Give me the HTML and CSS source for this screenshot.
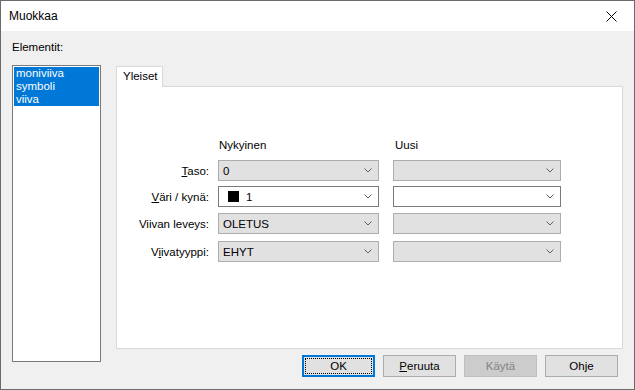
FILE: index.html
```html
<!DOCTYPE html>
<html lang="fi">
<head>
    <meta charset="UTF-8">
    <title>Muokkaa</title>
    <link rel="stylesheet" href="styles.css">
</head>
<body>
    <div class="window">
        <div class="titlebar">
            <span class="title">Muokkaa</span>
            <span class="close">
                <svg width="11" height="11" viewBox="0 0 11 11"><path d="M0.5 0.5 L10.5 10.5 M10.5 0.5 L0.5 10.5" stroke="#000" stroke-width="1"/></svg>
            </span>
        </div>
        <div class="content">
            <div class="left">
                <div class="caption">Elementit:</div>
                <div class="listbox">
                    <div class="item selected">moniviiva</div>
                    <div class="item selected">symboli</div>
                    <div class="item selected">viiva</div>
                </div>
            </div>
            <div class="right">
                <div class="tabs">
                    <div class="tab">Yleiset</div>
                </div>
                <div class="page">
                    <div class="row head">
                        <span class="lbl"></span>
                        <span class="col-cur">Nykyinen</span>
                        <span class="col-new">Uusi</span>
                    </div>
                    <div class="row">
                        <span class="lbl"><u>T</u>aso:</span>
                        <div class="combo cur"><span class="val">0</span><svg class="chev" width="8" height="5" viewBox="0 0 8 5"><path d="M0.5 0.5 L4 4 L7.5 0.5" fill="none" stroke="#606060"/></svg></div>
                        <div class="combo new"><span class="val"></span><svg class="chev" width="8" height="5" viewBox="0 0 8 5"><path d="M0.5 0.5 L4 4 L7.5 0.5" fill="none" stroke="#606060"/></svg></div>
                    </div>
                    <div class="row">
                        <span class="lbl"><u>V</u>äri / kynä:</span>
                        <div class="combo cur edit"><span class="val"><span class="swatch"></span>1</span><svg class="chev" width="8" height="5" viewBox="0 0 8 5"><path d="M0.5 0.5 L4 4 L7.5 0.5" fill="none" stroke="#606060"/></svg></div>
                        <div class="combo new edit"><span class="val"></span><svg class="chev" width="8" height="5" viewBox="0 0 8 5"><path d="M0.5 0.5 L4 4 L7.5 0.5" fill="none" stroke="#606060"/></svg></div>
                    </div>
                    <div class="row">
                        <span class="lbl">Viivan leveys:</span>
                        <div class="combo cur"><span class="val">OLETUS</span><svg class="chev" width="8" height="5" viewBox="0 0 8 5"><path d="M0.5 0.5 L4 4 L7.5 0.5" fill="none" stroke="#606060"/></svg></div>
                        <div class="combo new"><span class="val"></span><svg class="chev" width="8" height="5" viewBox="0 0 8 5"><path d="M0.5 0.5 L4 4 L7.5 0.5" fill="none" stroke="#606060"/></svg></div>
                    </div>
                    <div class="row">
                        <span class="lbl">V<u>i</u>ivatyyppi:</span>
                        <div class="combo cur"><span class="val">EHYT</span><svg class="chev" width="8" height="5" viewBox="0 0 8 5"><path d="M0.5 0.5 L4 4 L7.5 0.5" fill="none" stroke="#606060"/></svg></div>
                        <div class="combo new"><span class="val"></span><svg class="chev" width="8" height="5" viewBox="0 0 8 5"><path d="M0.5 0.5 L4 4 L7.5 0.5" fill="none" stroke="#606060"/></svg></div>
                    </div>
                </div>
                <div class="buttons">
                    <button class="btn default"><span class="focus">OK</span></button>
                    <button class="btn"><u>P</u>eruuta</button>
                    <button class="btn disabled">Käytä</button>
                    <button class="btn">Ohje</button>
                </div>
            </div>
        </div>
    </div>
</body>
</html>
```

FILE: styles.css
```css
* {
    box-sizing: border-box;
}
body {
    margin: 0;
    font-family: "Liberation Sans", Arial, sans-serif;
    font-size: 11.5px;
    color: #000;
}
.window {
    width: 635px;
    height: 390px;
    border: 1px solid #6b6b6b;
    background-color: #f0f0f0;
    display: flex;
    flex-direction: column;
}
.titlebar {
    height: 30px;
    background-color: #fff;
    display: flex;
    align-items: center;
    justify-content: space-between;
    padding-left: 8px;
    flex-shrink: 0;
}
.title {
    font-size: 12px;
}
.close {
    width: 46px;
    height: 30px;
    display: flex;
    align-items: center;
    justify-content: center;
}
.content {
    display: flex;
    flex: 1;
}
.left {
    padding: 9px 0 0 11px;
    width: 115px;
}
.caption {
    line-height: 15px;
    height: 15px;
    margin-bottom: 10px;
}
.listbox {
    width: 89px;
    height: 297px;
    border: 1px solid #7a7a7a;
    background-color: #fff;
    padding: 1px;
}
.item {
    line-height: 13px;
    height: 13px;
    padding-left: 2px;
}
.item.selected {
    background-color: #0078d7;
    color: #fff;
}
.right {
    padding-top: 35px;
    width: 507px;
    display: flex;
    flex-direction: column;
}
.tabs {
    display: flex;
    height: 20px;
}
.tab {
    width: 47px;
    height: 21px;
    border: 1px solid #d9d9d9;
    border-bottom: none;
    background-color: #fff;
    padding-left: 6px;
    line-height: 18px;
    position: relative;
    z-index: 1;
}
.page {
    height: 263px;
    border: 1px solid #d9d9d9;
    background-color: #fff;
    padding: 50px 0 0 10px;
}
.row {
    display: flex;
    align-items: center;
    height: 21px;
}
.row.head {
    height: 15px;
    margin-bottom: 8px;
}
.row:nth-child(3) {
    margin-top: 5px;
}
.row:nth-child(4) {
    margin-top: 6px;
}
.row:nth-child(5) {
    margin-top: 7px;
}
.lbl {
    width: 82px;
    text-align: right;
    margin-right: 9px;
    white-space: nowrap;
}
.col-cur {
    width: 161px;
    margin-right: 14px;
    padding-left: 1px;
}
.col-new {
    padding-left: 2px;
}
.combo {
    height: 21px;
    border: 1px solid #adadad;
    background-color: #e1e1e1;
    display: flex;
    align-items: center;
    justify-content: space-between;
    padding: 0 6px 0 4px;
}
.combo.edit {
    background-color: #fff;
    border-color: #7a7a7a;
}
.combo.cur {
    width: 161px;
    margin-right: 14px;
}
.combo.new {
    width: 168px;
}
.val {
    display: flex;
    align-items: center;
}
.swatch {
    display: inline-block;
    width: 11px;
    height: 11px;
    background-color: #000;
    margin: 0 7px 0 5px;
}
.buttons {
    display: flex;
    justify-content: flex-end;
    gap: 8px;
    margin-top: 6px;
    padding-right: 5px;
}
.btn {
    width: 73px;
    height: 22px;
    border: 1px solid #adadad;
    background-color: #e1e1e1;
    font-family: inherit;
    font-size: inherit;
    color: #000;
    padding: 0;
    display: flex;
    align-items: center;
    justify-content: center;
}
.btn.default {
    border: 2px solid #0078d7;
    padding: 1px;
}
.btn .focus {
    width: 100%;
    height: 100%;
    border: 1px dotted #000;
    display: flex;
    align-items: center;
    justify-content: center;
}
.btn.disabled {
    background-color: #cccccc;
    border-color: #bfbfbf;
    color: #838383;
}
```
